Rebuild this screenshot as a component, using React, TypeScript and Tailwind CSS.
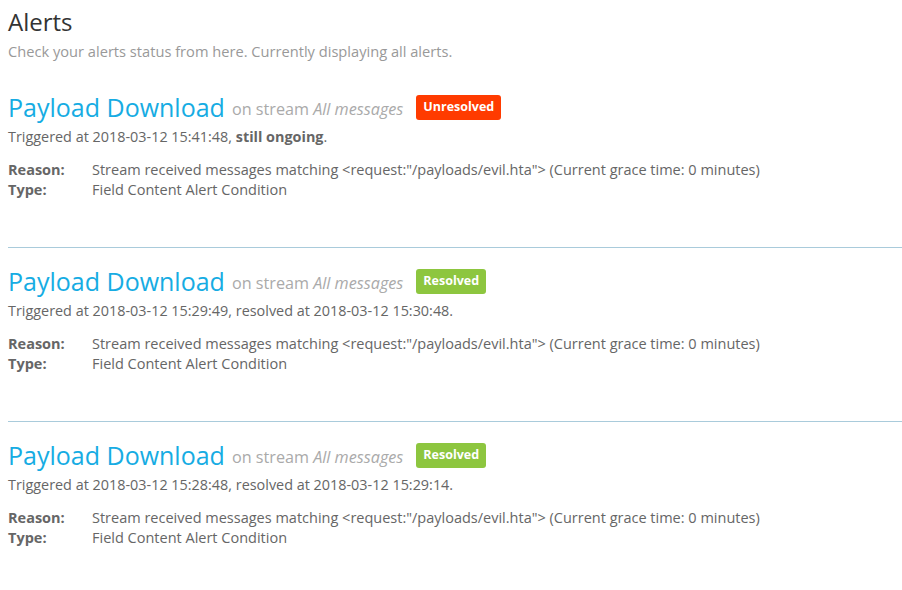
import React from "react";

type Alert = {
  id: number;
  title: string;
  stream: string;
  resolved: boolean;
  triggeredAt: string;
  resolvedAt?: string;
};

const alerts: Alert[] = [
  { id: 1, title: "Payload Download", stream: "All messages", resolved: false, triggeredAt: "2018-03-12 15:41:48" },
  {
    id: 2,
    title: "Payload Download",
    stream: "All messages",
    resolved: true,
    triggeredAt: "2018-03-12 15:29:49",
    resolvedAt: "2018-03-12 15:30:48",
  },
  {
    id: 3,
    title: "Payload Download",
    stream: "All messages",
    resolved: true,
    triggeredAt: "2018-03-12 15:28:48",
    resolvedAt: "2018-03-12 15:29:14",
  },
];

function AlertItem({ alert, last }: { alert: Alert; last: boolean }) {
  return (
    <div className={last ? "" : "border-b border-[#a9cbdb] pb-[47px] mb-[18px]"}>
      <div className="flex items-center h-[30px]">
        <span className="text-[25px] leading-[30px] text-[#16ace3]">{alert.title}</span>
        <span className="ml-[7px] mt-[4px] text-[16.2px] text-[#aaaaaa]">
          on stream <em>{alert.stream}</em>
        </span>
        <span
          className={`ml-[13px] h-[25px] px-[7px] flex items-center rounded-[3px] text-[12.5px] font-bold text-white ${
            alert.resolved ? "bg-[#8dc63f]" : "bg-[#ff3b00]"
          }`}
        >
          {alert.resolved ? "Resolved" : "Unresolved"}
        </span>
      </div>
      <p className="mt-[5px] text-[14.4px] leading-5 text-[#666666]">
        Triggered at {alert.triggeredAt},{" "}
        {alert.resolved ? (
          <>resolved at {alert.resolvedAt}.</>
        ) : (
          <>
            <strong>still ongoing</strong>.
          </>
        )}
      </p>
      <dl className="mt-[13px] text-[14.5px] leading-5 text-[#666666]">
        <div className="flex">
          <dt className="w-[84px] font-bold">Reason:</dt>
          <dd>
            Stream received messages matching &lt;request:"/payloads/evil.hta"&gt; (Current grace time: 0 minutes)
          </dd>
        </div>
        <div className="flex">
          <dt className="w-[84px] font-bold">Type:</dt>
          <dd>Field Content Alert Condition</dd>
        </div>
      </dl>
    </div>
  );
}

export default function App() {
  return (
    <div className="w-[902px] h-[590px] bg-white pl-2 pt-[9px] font-['Open_Sans',sans-serif] overflow-hidden">
      <h1 className="text-2xl leading-[26px] text-[#333333]">Alerts</h1>
      <p className="mt-[6px] text-[14.65px] leading-5 text-[#999999]">
        Check your alerts status from here. Currently displaying all alerts.
      </p>
      <div className="mt-[31px]">
        {alerts.map((a, i) => (
          <AlertItem key={a.id} alert={a} last={i === alerts.length - 1} />
        ))}
      </div>
    </div>
  );
}
